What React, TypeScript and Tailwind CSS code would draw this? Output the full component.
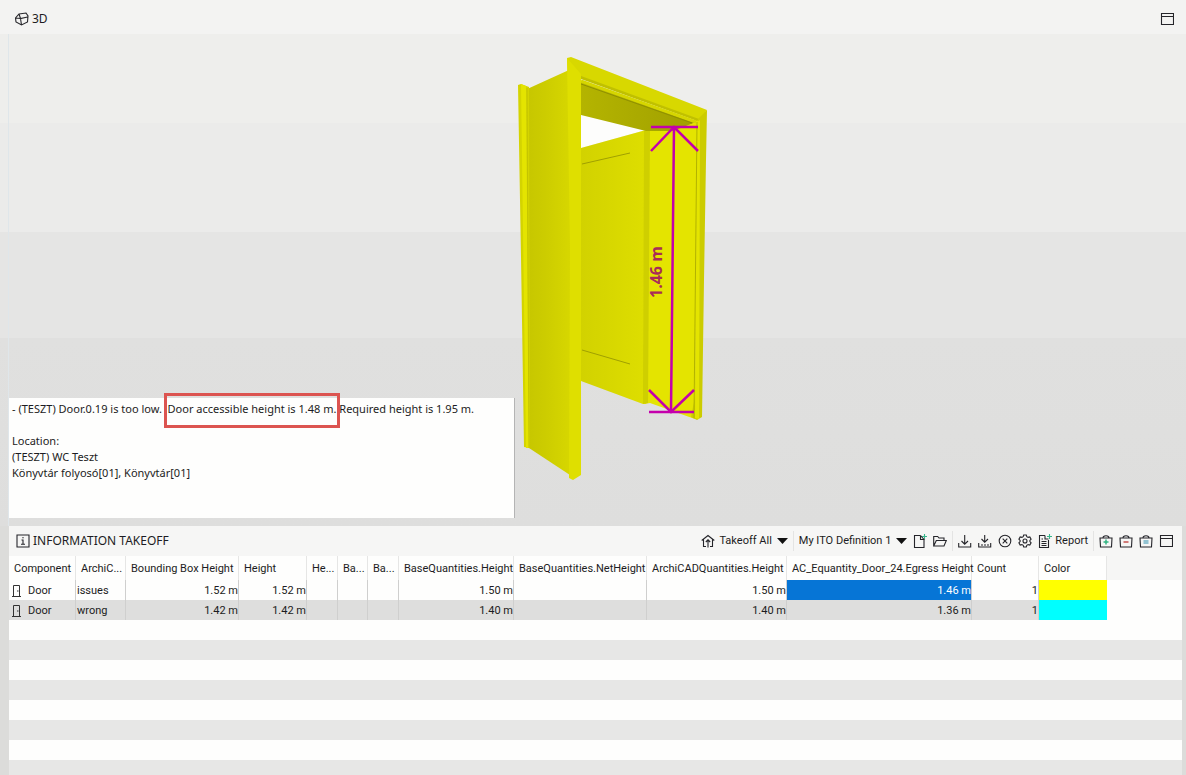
import type { ReactNode } from 'react'

import clsx from 'clsx'

type Row = {
  component: string
  cells: string[]
  color: string
}

const COLUMNS = [
  { label: 'Component', width: 'w-[67px]' },
  { label: 'ArchiC...', width: 'w-[50px]' },
  { label: 'Bounding Box Height', width: 'w-[113px]' },
  { label: 'Height', width: 'w-[68px]' },
  { label: 'He...', width: 'w-[31px]' },
  { label: 'Ba...', width: 'w-[30px]' },
  { label: 'Ba...', width: 'w-[31px]' },
  { label: 'BaseQuantities.Height', width: 'w-[115px]' },
  { label: 'BaseQuantities.NetHeight', width: 'w-[133px]' },
  { label: 'ArchiCADQuantities.Height', width: 'w-[140px]' },
  { label: 'AC_Equantity_Door_24.Egress Height', width: 'w-[185px]' },
  { label: 'Count', width: 'w-[67px]' },
  { label: 'Color', width: 'w-[68px]' },
]

const ROWS: Row[] = [
  {
    component: 'Door',
    cells: ['issues', '1.52 m', '1.52 m', '', '', '', '1.50 m', '', '1.50 m', '1.46 m', '1'],
    color: 'bg-[#ffff00]',
  },
  {
    component: 'Door',
    cells: ['wrong', '1.42 m', '1.42 m', '', '', '', '1.40 m', '', '1.40 m', '1.36 m', '1'],
    color: 'bg-[#00ffff]',
  },
]

const EMPTY_ROWS = 8
const SELECTED = { row: 0, cell: 9 }

export default function App() {
  return (
    <div className="flex h-screen flex-col overflow-hidden bg-[#dcdcda] font-['Noto_Sans',sans-serif] text-[11px] text-[#1c1c22]">
      <header className="flex h-[34px] shrink-0 items-center justify-between bg-[#f3f3f2] pt-1 pr-3 pl-[15px]">
        <h1 className="flex items-center gap-[3px] text-[12px]">
          <CubeIcon />
          3D
        </h1>
        <IconButton label="Maximize 3D view">
          <WindowIcon />
        </IconButton>
      </header>

      <main className="min-h-0 flex-1 bg-[linear-gradient(#eeeeec_0,#eeeeec_89px,#ebebea_89px,#ebebea_198px,#e5e5e4_198px,#e5e5e4_304px,#e0e0df_304px,#dededd_100%)] pr-1 pl-[8px]">
        <div className="relative h-full border-l border-[#dfe6ea]">
          <DoorModel />
          <Message />
        </div>
      </main>

      <section className="mr-1 ml-[9px] h-[249px] shrink-0 overflow-hidden bg-[#f6f6f5] font-[Roboto,sans-serif]">
        <div className="flex h-[30px] items-center justify-between pr-[9px] pl-[7px]">
          <h2 className="flex items-center gap-[3px] font-['Noto_Sans',sans-serif] text-[12px]">
            <InfoIcon />
            INFORMATION TAKEOFF
          </h2>
          <Toolbar />
        </div>
        <TakeoffTable />
      </section>
    </div>
  )
}

function Message() {
  return (
    <div className="absolute bottom-2 left-0 h-[120px] w-[506px] border-r border-[#b4b4b4] bg-[#fefefd] px-[3px] py-[3px] leading-4 whitespace-nowrap">
      <p>
        - (TESZT) Door.0.19 is too low.&nbsp;{' '}
        <span className="relative">
          Door accessible height is 1.48 m.
          <span className="absolute -inset-x-1 -top-2 -bottom-3 border-3 border-[#dc5450]" />
        </span>{' '}
        Required height is 1.95 m.
      </p>
      <p className="mt-4">Location:</p>
      <p>(TESZT) WC Teszt</p>
      <p>Könyvtár folyosó[01], Könyvtár[01]</p>
    </div>
  )
}

function Toolbar() {
  return (
    <div className="flex items-center gap-[6px]">
      <span className="flex items-center gap-1">
        <HouseIcon />
        <Dropdown label="Takeoff scope" value="Takeoff All" />
      </span>
      <Separator />
      <Dropdown label="ITO definition" value="My ITO Definition 1" />
      <IconButton label="New definition">
        <path d="M7.500 1.500h-6v12H11V5.500M7.500 1.500v4H11L7.500 1.500" />
        <path d="M11.500 0v5M9 2.500h5" stroke="#35b58a" />
      </IconButton>
      <IconButton label="Open definition">
        <path d="M.7 12V2.500h4L6 4h5v2.500M.7 12l2.600-5.500h10L11 12z" />
      </IconButton>
      <Separator />
      <IconButton label="Take off">
        <path d="M.7 9v4h12V9M6.700 1v9M3.500 7l3.200 3.200L10 7" />
      </IconButton>
      <IconButton label="Take off selected">
        <path d="M.7 9v4h12V9M6.700 1v7M3.500 5l3.200 3.200L10 5" />
        <path d="M3 11h8" strokeDasharray="2 1" />
      </IconButton>
      <IconButton label="Clear">
        <circle cx="7" cy="7" r="5.800" />
        <path d="M4.700 4.700l4.600 4.600M9.300 4.700L4.700 9.300" />
      </IconButton>
      <IconButton label="Settings">
        <circle cx="7" cy="7" r="2" />
        <path d="M5.700 1h2.600l.5 1.700 1.300.7 1.700-.4 1.300 2.200L11.900 6.500v1l1.200 1.300-1.300 2.200-1.700-.4-1.300.7L8.300 13H5.700l-.5-1.700-1.300-.7-1.700.4L.9 8.800l1.200-1.300v-1L.9 5.200 2.200 3l1.700.4 1.300-.7z" />
      </IconButton>
      <button className="flex items-center gap-[3px]">
        <Icon>
          <path d="M7 1.500H1.500v12h9V6M7 1.500V5h3.500M3.500 5H5M3.500 7.500h5M3.500 9.500h5M3.500 11.500h5" />
          <path d="M11.500 0v5M9 2.500h5" stroke="#35b58a" />
        </Icon>
        Report
      </button>
      <Separator />
      <IconButton label="Add to selection">
        <BasketShape />
        <path d="M7 5.500v5M4.500 8h5" stroke="#2fb380" strokeWidth="1.500" />
      </IconButton>
      <IconButton label="Remove from selection">
        <BasketShape />
        <path d="M4.500 8h5" stroke="#c4504c" strokeWidth="1.500" />
      </IconButton>
      <IconButton label="Set as selection">
        <BasketShape />
        <path d="M4.500 7h5M4.500 9h5" stroke="#2f8fb0" />
      </IconButton>
      <IconButton label="Maximize takeoff">
        <WindowIcon />
      </IconButton>
    </div>
  )
}

function Dropdown({ label, value }: { label: string; value: string }) {
  return (
    <label className="flex items-center gap-[5px]">
      <select aria-label={label} className="field-sizing-content appearance-none bg-transparent">
        <option>{value}</option>
      </select>
      <svg className="h-[6px] w-[11px]" viewBox="0 0 11 6" fill="#111">
        <path d="M0 0h11L5.500 6z" />
      </svg>
    </label>
  )
}

function Separator() {
  return <span className="-mx-px h-5 w-px bg-[#e4e4e3]" />
}

function TakeoffTable() {
  return (
    <table className="w-full table-fixed border-separate border-spacing-0 bg-[#fefefd]">
      <thead>
        <tr className="h-[24px]">
          {COLUMNS.map(({ label, width }, index) => (
            <th
              key={index}
              className={clsx(
                width,
                'border-r border-[#e6e6e5] p-0 pt-[3px] pl-[5px] text-left font-normal whitespace-nowrap',
              )}
            >
              {label}
            </th>
          ))}
          <th className="bg-[#f6f6f5]" />
        </tr>
      </thead>
      <tbody>
        {ROWS.map(({ component, cells, color }, row) => (
          <tr key={row} className="h-5">
            <td
              className={clsx(
                'border-r border-[#cfcfce] p-0 pt-[2px] pl-[3px]',
                row % 2 && 'bg-[#dededd]',
              )}
            >
              <span className="flex items-center gap-[7px]">
                <DoorIcon />
                {component}
              </span>
            </td>
            {cells.map((text, cell) => (
              <td
                key={cell}
                className={clsx(
                  'border-r border-[#cfcfce] p-0 pt-[2px] whitespace-nowrap',
                  cell === 0 ? 'pl-px text-left' : 'text-right',
                  row === SELECTED.row && cell === SELECTED.cell
                    ? 'bg-[#0675d6] text-white'
                    : row % 2 && 'bg-[#dededd]',
                )}
              >
                {text}
              </td>
            ))}
            <td className={clsx('p-0', color)} />
            <td />
          </tr>
        ))}
        {Array.from({ length: EMPTY_ROWS }).map((_, index) => (
          <tr key={index} className="h-5 odd:bg-[#fefefd] even:bg-[#e7e7e6]">
            <td colSpan={COLUMNS.length + 1} />
          </tr>
        ))}
      </tbody>
    </table>
  )
}

function DoorModel() {
  return (
    <svg className="h-full w-full" viewBox="9 34 1173 492" role="img" aria-label="Door model">
      <defs>
        <linearGradient id="reveal" x2="1">
          <stop offset="0" stopColor="#c6c600" />
          <stop offset="0.4" stopColor="#cccc00" />
          <stop offset="1" stopColor="#d8d800" />
        </linearGradient>
        <linearGradient id="leaf" x2="1">
          <stop offset="0" stopColor="#d2d200" />
          <stop offset="1" stopColor="#dede00" />
        </linearGradient>
        <linearGradient id="ceiling" x2="1">
          <stop offset="0" stopColor="#b4b400" />
          <stop offset="1" stopColor="#a0a000" />
        </linearGradient>
      </defs>

      {/* back casing and left reveal */}
      <path d="M525 90l44-20 4 407-44-29z" fill="url(#reveal)" />
      <path d="M518 85l3-1 8 3 1 361-6-1-3-190z" fill="#d4d400" />
      <path d="M521 84l5 2 3 362h-3z" fill="#e4e400" />
      <path d="M527 88l2 360" stroke="#c4c400" />

      {/* opening, leaf and right reveal */}
      <path d="M581 114l65 16-65 18z" fill="#fdfdfc" />
      <path d="M581 148l65-18v274h-3l-62-23z" fill="url(#leaf)" />
      <path d="M582 164l48-11M582 350l48 14" stroke="#a0a000" fill="none" />
      <path d="M644 131l6-1 32-4 16-8-3 301-45-16-6 1z" fill="#e4e400" />
      <path d="M644 131h6l-2 272-5 1z" fill="#cfcf00" />
      <path d="M581 81l115 41-23 9h-27l-65-16z" fill="url(#ceiling)" />

      {/* front frame */}
      <path d="M567 58l4-1 136 53-8 11-118-43-13-2z" fill="#d8d800" />
      <path d="M581 76l118 43-2 2-116-42z" fill="#c0c000" />
      <path d="M581 81l115 41" stroke="#d6d600" strokeWidth="3" />
      <path d="M581 84l111 39" stroke="#909000" />
      <path d="M567 58l14 16v401l-8 5-4-2 1-230z" fill="#dfdf00" />
      <path d="M698 119l9-9-1 50-2 120-2 137-5 3-6-3 4-20z" fill="#cccc00" />
      <path d="M697 122l-2 296 4 1 1-299z" fill="#e4e400" />
      <path d="M697 122l-3 296" stroke="#b2b200" />

      {/* measured height */}
      <g stroke="#c400ac" strokeWidth="2.500" fill="none">
        <path d="M651 127h47M674 127l-3 285M649 412h45" />
        <path d="M651 151l23-24 24 24M649 390l22 22 23-22" />
      </g>
      <text
        transform="translate(662 298) rotate(-90)"
        className="font-['Open_Sans',sans-serif] text-[16px] font-bold"
        fill="#a82c58"
      >
        1.46 m
      </text>
    </svg>
  )
}

function Icon({ children }: { children: ReactNode }) {
  return (
    <svg
      className="h-[14px] w-[14px] shrink-0"
      viewBox="0 0 14 14"
      fill="none"
      stroke="#25252a"
      strokeWidth="1.100"
    >
      {children}
    </svg>
  )
}

function IconButton({ label, children }: { label: string; children: ReactNode }) {
  return (
    <button aria-label={label}>
      <Icon>{children}</Icon>
    </button>
  )
}

function WindowIcon() {
  return <path d="M1.500 1.500h12v11h-12zM1.500 4.500h12" />
}

function BasketShape() {
  return <path d="M1 4h12l-.5 9h-11zM4 4c0-3 6-3 6 0" />
}

function CubeIcon() {
  return (
    <Icon>
      <path d="M4 2l7-1 2 3-.5 6-6 3L1 10 .5 6zM4 2l1.500 4.500L12.500 5M5.500 6.500l1 6.500M.7 6l4.800.5" />
    </Icon>
  )
}

function InfoIcon() {
  return (
    <Icon>
      <path d="M1 1h12v12H1zM5.500 6H7v4M5 10.200h4M6.300 3.800h1.400" />
    </Icon>
  )
}

function HouseIcon() {
  return (
    <Icon>
      <path d="M.7 6.500L7 1.500l6.300 5M2.500 5.500v7H5M11.500 5.500v7H9M7 13.500V6M4.800 8L7 5.800 9.200 8" />
    </Icon>
  )
}

function DoorIcon() {
  return (
    <svg className="h-3 w-[9px]" viewBox="0 0 9 12" fill="none" stroke="#333">
      <path d="M0 11.500h9M1.500 11V.5h6V11M5 6h1.500" />
    </svg>
  )
}
